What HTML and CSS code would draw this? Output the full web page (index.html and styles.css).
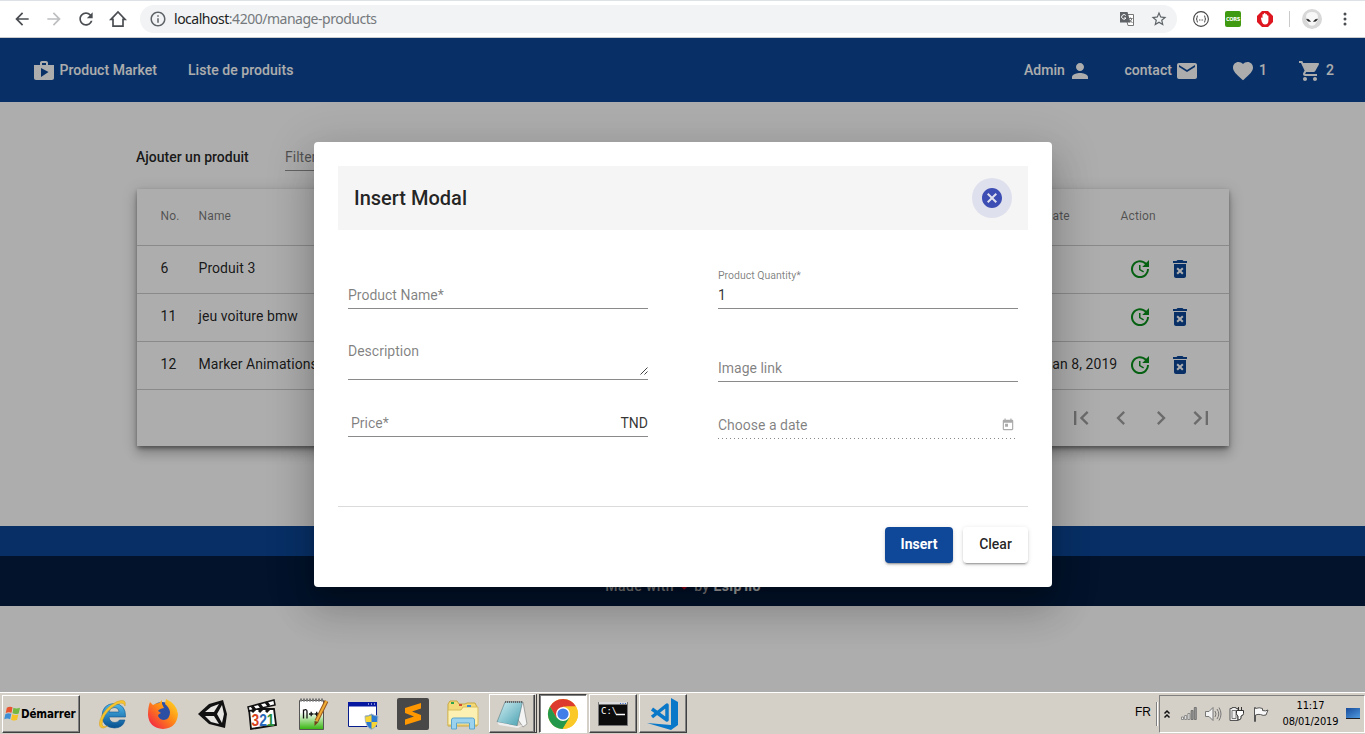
FILE: index.html
```html
<!DOCTYPE html>
<html lang="fr">
<head>
<meta charset="utf-8">
<title>Product Market</title>
<link rel="stylesheet" href="styles.css">
</head>
<body>
<svg class="defs" width="0" height="0">
  <symbol id="update" viewBox="0 0 24 24"><path d="M21 10.12h-6.78l2.74-2.82c-2.73-2.7-7.15-2.8-9.88-.1-2.73 2.71-2.73 7.08 0 9.79 2.73 2.71 7.15 2.71 9.88 0C18.32 15.65 19 14.08 19 12.1h2c0 1.98-.88 4.55-2.64 6.29-3.51 3.48-9.21 3.48-12.72 0-3.5-3.47-3.53-9.11-.02-12.58 3.51-3.47 9.14-3.47 12.65 0L21 3v7.12zM12.5 8v4.25l3.5 2.08-.72 1.21L11 13V8h1.5z"/></symbol>
  <symbol id="trash" viewBox="0 0 24 24"><path fill="#fff" d="M8 9h8v9H8z"/><path d="M6 19c0 1.1.9 2 2 2h8c1.1 0 2-.9 2-2V7H6v12zm2.46-7.12l1.41-1.41L12 12.59l2.12-2.12 1.41 1.41L13.41 14l2.12 2.12-1.41 1.41L12 15.41l-2.12 2.12-1.41-1.41L10.59 14l-2.13-2.12zM15.5 4l-1-1h-5l-1 1H5v2h14V4z"/></symbol>
</svg>
<div class="screen">
  <header class="browser">
    <svg class="b-ico" viewBox="0 0 24 24"><path d="M20 11H7.83l5.59-5.59L12 4l-8 8 8 8 1.41-1.41L7.83 13H20v-2z"/></svg>
    <svg class="b-ico off" viewBox="0 0 24 24"><path d="M4 11h12.17l-5.59-5.59L12 4l8 8-8 8-1.41-1.41L16.17 13H4z"/></svg>
    <svg class="b-ico" viewBox="0 0 24 24"><path d="M17.65 6.35C16.2 4.9 14.21 4 12 4c-4.42 0-7.99 3.58-7.99 8s3.57 8 7.99 8c3.73 0 6.84-2.55 7.73-6h-2.08c-.82 2.33-3.04 4-5.65 4-3.31 0-6-2.69-6-6s2.69-6 6-6c1.66 0 3.14.69 4.22 1.78L13 11h7V4l-2.35 2.35z"/></svg>
    <svg class="b-ico" viewBox="0 0 24 24"><path d="M3.5 12.500L12 3.500l8.500 9H18V20.500H6V12.500z" fill="none" stroke="#4a4d51" stroke-width="2"/></svg>
    <div class="omnibox">
      <svg class="info" viewBox="0 0 24 24"><path d="M11 17h2v-6h-2v6zm1-15C6.480 2 2 6.480 2 12s4.480 10 10 10 10-4.480 10-10S17.520 2 12 2zm0 18c-4.410 0-8-3.590-8-8s3.590-8 8-8 8 3.590 8 8-3.590 8-8 8zM11 9h2V7h-2v2z"/></svg>
      <span class="url"><b>localhost</b>:4200/manage-products</span>
      <svg class="translate" viewBox="0 0 16 16"><path fill="#fff" stroke="#777" d="M6 3.500h8.500v11H9z"/><path fill="#5f6368" d="M1 1h7.500l3 10.500H1z"/><path d="M6.800 4.500A2.300 2.300 0 1 0 7 7H5" fill="none" stroke="#fff"/><path d="M9.500 7.500h4M11.500 6.500v1M13 7.500q-.8 2.500-2.500 3.500M10.800 9l2.700 3" fill="none" stroke="#777"/></svg>
      <svg class="star" viewBox="0 0 24 24"><path d="M22 9.240l-7.190-.62L12 2 9.190 8.630 2 9.240l5.460 4.730L5.820 21 12 17.270 18.180 21l-1.630-7.030L22 9.240zM12 15.400l-3.760 2.270 1-4.280-3.320-2.880 4.380-.38L12 6.100l1.710 4.040 4.380.38-3.320 2.880 1 4.280L12 15.400z"/></svg>
    </div>
    <svg class="ext ext1" viewBox="0 0 16 16"><circle cx="8" cy="8" r="7.400" fill="none" stroke="#444" stroke-width="1.100"/><path d="M5 4.800q-1.200 0-1 1.700Q4.200 8 3 8q1.200 0 1 1.500-.2 1.700 1 1.700M11 4.800q1.200 0 1 1.700-.2 1.500 1 1.500-1.200 0-1 1.500.2 1.700-1 1.700M6 9h.9M7.600 9h.9M9.200 9h.9" fill="none" stroke="#444"/></svg>
    <span class="ext cors"><span>CORS</span></span>
    <svg class="ext" viewBox="0 0 16 16"><path fill="#dd1620" d="M5 0h6l5 5v6l-5 5H5l-5-5V5z"/><path fill="#fff" d="M4 7.500q0-1 .7-1t.8 1V4q0-1 .7-1t.7 1V2.800q0-.9.8-.9t.8.900V3.800q0-.9.700-.9t.8.9V5q0-.8.700-.8t.7.8v4.800q0 3.700-3.500 3.700Q6 13.500 4.900 11z"/></svg>
    <span class="sep"></span>
    <svg class="avatar" viewBox="0 0 20 20"><circle cx="10" cy="10" r="10" fill="#d8d8d8"/><path d="M4 8q0-5 6-5t6 5q0 4-3 7.500-3 2.500-6 0Q4 12 4 8z" fill="#f7f7f7"/><path d="M4.500 10q3 0 4 2.500-3 .5-4-2.500zM15.500 10q-3 0-4 2.500 3 .5 4-2.500z" fill="#222" stroke="#222" stroke-width=".5"/></svg>
    <svg class="dots" viewBox="0 0 4 16"><circle cx="2" cy="3" r="1.500"/><circle cx="2" cy="8" r="1.500"/><circle cx="2" cy="13" r="1.500"/></svg>
  </header>

  <main class="viewport">
    <nav class="navbar">
      <a class="brand"><svg viewBox="0 0 24 24"><path d="M16 6V4c0-1.110-.89-2-2-2h-4c-1.110 0-2 .89-2 2v2H2v13c0 1.110.89 2 2 2h16c1.110 0 2-.89 2-2V6h-6zm-6-2h4v2h-4V4zM9 18V9l7.500 4L9 18z"/></svg>Product Market</a>
      <a class="list">Liste de produits</a>
      <span class="grow"></span>
      <a class="admin">Admin<svg viewBox="0 0 24 24"><path d="M12 12c2.210 0 4-1.790 4-4s-1.790-4-4-4-4 1.790-4 4 1.790 4 4 4zm0 2c-2.670 0-8 1.340-8 4v2h16v-2c0-2.660-5.330-4-8-4z"/></svg></a>
      <a class="contact">contact<svg viewBox="0 0 24 24"><path d="M20 4H4c-1.100 0-1.990.9-1.990 2L2 18c0 1.100.9 2 2 2h16c1.100 0 2-.9 2-2V6c0-1.100-.9-2-2-2zm0 4l-8 5-8-5V6l8 5 8-5v2z"/></svg></a>
      <a class="fav"><svg viewBox="0 0 24 24"><path d="M12 21.350l-1.450-1.320C5.400 15.360 2 12.280 2 8.500 2 5.420 4.420 3 7.500 3c1.740 0 3.410.81 4.500 2.090C13.090 3.810 14.760 3 16.500 3 19.580 3 22 5.420 22 8.500c0 3.780-3.400 6.860-8.550 11.540L12 21.350z"/></svg>1</a>
      <a class="cart"><svg viewBox="0 0 24 24"><path d="M7 18c-1.100 0-1.990.9-1.990 2S5.900 22 7 22s2-.9 2-2-.9-2-2-2zM1 2v2h2l3.600 7.590-1.350 2.450c-.16.28-.25.61-.25.96 0 1.100.9 2 2 2h12v-2H7.420c-.14 0-.25-.11-.25-.25l.03-.12.9-1.630h7.450c.75 0 1.410-.41 1.750-1.030l3.580-6.490c.08-.14.12-.31.12-.48 0-.55-.45-1-1-1H5.210l-.94-2H1zm16 16c-1.100 0-1.990.9-1.990 2s.89 2 1.990 2 2-.9 2-2-.9-2-2-2z"/></svg>2</a>
    </nav>

    <section class="content">
      <div class="tools"><span class="add">Ajouter un produit</span><span class="filter">Filter</span></div>
      <div class="card">
        <div class="row head"><span>No.</span><span>Name</span><span>Date</span><span>Action</span></div>
        <div class="row"><span>6</span><span>Produit 3</span><span></span><span class="acts"><svg class="up"><use href="#update"/></svg><svg class="del"><use href="#trash"/></svg></span></div>
        <div class="row"><span>11</span><span>jeu voiture bmw</span><span></span><span class="acts"><svg class="up"><use href="#update"/></svg><svg class="del"><use href="#trash"/></svg></span></div>
        <div class="row"><span>12</span><span>Marker Animations</span><span>Jan 8, 2019</span><span class="acts"><svg class="up"><use href="#update"/></svg><svg class="del"><use href="#trash"/></svg></span></div>
        <div class="pager">
          <svg viewBox="0 0 24 24"><path d="M18.410 16.590L13.820 12l4.590-4.590L17 6l-6 6 6 6zM6 6h2v12H6z"/></svg>
          <svg viewBox="0 0 24 24"><path d="M15.410 7.410L14 6l-6 6 6 6 1.410-1.410L10.830 12z"/></svg>
          <svg viewBox="0 0 24 24"><path d="M10 6L8.590 7.410 13.170 12l-4.580 4.590L10 18l6-6z"/></svg>
          <svg viewBox="0 0 24 24"><path d="M5.590 7.410L10.180 12l-4.590 4.590L7 18l6-6-6-6zM16 6h2v12h-2z"/></svg>
        </div>
      </div>
    </section>
    <div class="band"></div>
    <footer class="footer">Made with <i>❤</i> by <b>Esip'llo</b></footer>

    <div class="overlay">
      <div class="modal">
        <div class="modal-bar"><h2>Insert Modal</h2>
          <span class="close"><svg viewBox="0 0 24 24"><path d="M12 2C6.470 2 2 6.470 2 12s4.470 10 10 10 10-4.470 10-10S17.530 2 12 2zm5 13.590L15.590 17 12 13.410 8.410 17 7 15.590 10.590 12 7 8.410 8.410 7 12 10.590 15.590 7 17 8.410 13.410 12 17 15.590z"/></svg></span>
        </div>
        <div class="form">
          <div class="col">
            <div class="field f-name">Product Name*</div>
            <div class="field f-desc">Description<svg class="grip" viewBox="0 0 8 8"><path d="M.5 7.500l7-7M4.500 7.500l3-3" stroke="#444" fill="none"/></svg></div>
            <div class="field f-price"><span>Price*</span><span class="dark">TND</span></div>
          </div>
          <div class="col">
            <div class="field f-qty"><small>Product Quantity*</small><span class="dark">1</span></div>
            <div class="field f-img">Image link</div>
            <div class="field f-date"><span>Choose a date</span><svg viewBox="0 0 24 24"><path d="M19 3h-1V1h-2v2H8V1H6v2H5c-1.110 0-1.990.9-1.990 2L3 19c0 1.100.89 2 2 2h14c1.100 0 2-.9 2-2V5c0-1.100-.9-2-2-2zm0 16H5V8h14v11zM7 10h5v5H7z"/></svg></div>
          </div>
        </div>
        <div class="actions"><span class="btn primary">Insert</span><span class="btn">Clear</span></div>
      </div>
    </div>
  </main>

  <footer class="taskbar">
    <div class="start"><svg viewBox="0 0 18 18"><path fill="#e8542f" d="M3 3q3-2 6-.5L8 8.300Q5 7 1.800 8.500z"/><path fill="#74b843" d="M10 3q3 1.500 7 0l-1.500 6Q12 10.300 9 8.800z"/><path fill="#3f8fd6" d="M1.500 9.500q3-1.500 6.200-.2L6.500 15Q3.500 13.500.3 15z"/><path fill="#f7c326" d="M8.700 9.800q3 1.500 6.500.3L13.800 16q-3 1.200-6.300-.4z"/></svg>Démarrer</div>
    <div class="apps">
      <span class="app"><svg viewBox="0 0 32 32"><defs><linearGradient id="ie" x2="0" y2="1"><stop stop-color="#4db9ec"/><stop offset="1" stop-color="#07508f"/></linearGradient></defs><path d="M28.500 19H12q.8 5.500 6 5.500 3 0 4.500-2.500h5.500Q26 30 17.500 30 5.500 29.500 5 18 5.500 6 17 5.500 29 6 28.500 19zM12 14h10Q21.500 9.500 17 9.500q-4.500.3-5 4.500z" fill="url(#ie)" stroke="#12558e" stroke-width=".6"/><path d="M28 8Q30 0 20 3.500 7 10 3 22q-2 8.500 3.500 8 2-.5 4-2-5 2-5.500-2Q5.500 17 15 9.500 26 1.500 28 8z" fill="#f6c52e" stroke="#d69a12" stroke-width=".5"/></svg></span>
      <span class="app"><svg viewBox="0 0 32 32"><defs><linearGradient id="ff" x1="1" y1="0" x2="0" y2="1"><stop stop-color="#ffe226"/><stop offset=".45" stop-color="#ff8a16"/><stop offset="1" stop-color="#f0134c"/></linearGradient></defs><circle cx="15" cy="15" r="11" fill="#2c4fa3"/><path d="M3 4l3 3q3-2 6-2l3-3v4l2 4q-5 1-6 3l3 2q-3 1-3 3 2 4 6 4 6-1 6-8-1-5-5-8L19 1q11 5 12 15-1 14-15 15Q2 30 1 17q0-8 2-13z" fill="url(#ff)"/></svg></span>
      <span class="app"><svg viewBox="0 0 32 32"><path fill="#111" d="M1 16L12 6l14-4 4 14-2 14-16-4z"/><path fill="#e8e6e2" d="M8 14h9l5-8-8 3zM20 16l5 9 2-9-2-9zM8 18l6 6 8 2-5-8z"/></svg></span>
      <span class="app"><svg viewBox="0 0 32 32"><path fill="#fff" stroke="#111" stroke-width="1.800" d="M2 11h25l2 16-25 4z"/><path fill="#fff" stroke="#111" stroke-width="1.500" d="M1 9l26-7 1 5-26 6z"/><path stroke="#111" stroke-width="3" d="M5 8l3 4M12 6l3 4M19 4l3 4M5 14l3-3M12 14l3-3M19 14l3-3"/><text x="4.500" y="28" class="n321" textLength="23" lengthAdjust="spacingAndGlyphs"><tspan fill="#d8431f">3</tspan><tspan fill="#2868b8">2</tspan><tspan fill="#278c37">1</tspan></text></svg></span>
      <span class="app"><svg viewBox="0 0 32 32"><defs><linearGradient id="np" x2="0" y2="1"><stop offset=".4" stop-color="#fff"/><stop offset="1" stop-color="#35b50c"/></linearGradient></defs><path fill="url(#np)" stroke="#555" d="M2.500 2.500h24v29h-24z"/><path stroke="#777" stroke-dasharray="2 1" stroke-width="3" d="M3 2h23"/><path fill="none" stroke="#111" stroke-width="1.300" d="M6.500 20.500v-9M6.500 12.500q3.500-2 3.500 1v7M12 16h4.500M14.200 13.800v4.500M17.500 16h4.500M19.700 13.800v4.500"/><path stroke="#9c5a1d" stroke-width="4" d="M29.500 3l-10 20"/><path stroke="#f0ad36" stroke-width="2" d="M29.500 3l-10 20"/><path d="M17.500 23l4 1-4 4z" fill="#754018"/></svg></span>
      <span class="app"><svg viewBox="0 0 32 32"><path fill="#fff" stroke="#061c8c" d="M1.500 4.500h28v24h-28z"/><path fill="#0617a0" d="M1 4h29v4.500H1z"/><path stroke="#fff" stroke-dasharray="1 2" d="M21 6h8"/><path d="M24.500 16q3 2 6.500 2 0 11-6.500 13.500Q18 29 18 18q3.500 0 6.500-2z" fill="#2d7bd0" stroke="#aab8c8"/><path fill="#f7d535" d="M24.500 17v7H19q-1-3-.5-5.500 3 0 6-1.500zM24.500 24v7q5-2 6-7z"/></svg></span>
      <span class="app"><svg viewBox="0 0 32 32"><rect width="32" height="32" rx="2" fill="#484848"/><path fill="#ff9800" d="M8 10l16-5v5.500l-9 3 9 3.500v5L8 27v-5.500l9-3L8 15z"/></svg></span>
      <span class="app"><svg viewBox="0 0 32 32"><path fill="#f3d978" stroke="#c9a842" d="M1 6l2-3h7l2 3h6l2-1h8l2 4v19H1z"/><path fill="#fcf0b3" stroke="#d8bd62" d="M1 12h13l2-3h15v18H1z"/><path stroke="#2da44b" stroke-width="2" d="M4 5h3"/><path stroke="#d04d31" stroke-width="2" d="M12 7h3"/><path stroke="#3689d4" stroke-width="2" d="M20 8h4"/><path fill="#9bd3ef" stroke="#5aa5ce" d="M4.500 31V22q0-2 2-2h19q2 0 2 2v9h-5v-6h-13v6z"/></svg></span>
      <span class="app raised stack"><svg viewBox="0 0 32 32"><defs><linearGradient id="nt" x2="1" y2="1"><stop stop-color="#d2eff3"/><stop offset="1" stop-color="#459fb0"/></linearGradient></defs><path fill="#f4f4f4" stroke="#888" stroke-width=".7" d="M10 4h17l4 22-4 3z"/><path fill="url(#nt)" stroke="#65858b" stroke-width=".7" d="M9 4h17.500L21 28 1 24z"/><path d="M1 24l20 4 6-1-5 3-19-3z" fill="#eee"/><path stroke="#666" stroke-dasharray="1 1" stroke-width="2" d="M9 4h18"/></svg></span>
      <span class="app active"><svg viewBox="0 0 32 32"><circle cx="16" cy="16" r="15" fill="#fbc927"/><path fill="#dc3b2d" d="M3 8.500A15 15 0 0 1 29 8.500H16L9.500 20z"/><path fill="#25994b" d="M3 8.500A15 15 0 0 0 16 31l6.500-11.200L9.500 19.800z"/><path fill="#fbc927" d="M29 8.500A15 15 0 0 1 15.500 31l7-11.300-3-11.200z"/><circle cx="16" cy="16" r="7" fill="#fff"/><circle cx="16" cy="16" r="5.600" fill="#3f7de8"/></svg></span>
      <span class="app raised"><svg viewBox="0 0 32 32"><path fill="#0c0c0c" stroke="#777" d="M1.500 4.500h29v23h-29z"/><path fill="#ddd" d="M2 4h28v2.500H2z"/><path stroke="#36c" stroke-dasharray="1 1.500" d="M23 5.500h6"/><text x="4" y="16" class="cmd">C:\</text><path stroke="#fff" stroke-width="1.500" d="M19 16.500h9"/></svg></span>
      <span class="app raised"><svg viewBox="0 0 32 32"><path fill="#0a78c8" d="M24 0l7 4v23l-7 5L0 25l24 2z"/><path fill="none" stroke="#0a78c8" stroke-width="3.500" stroke-linejoin="round" d="M5 11l15 11V7L5 19"/></svg></span>
    </div>
    <span class="lang">FR</span>
    <div class="tray">
      <svg class="chev" viewBox="0 0 8 10"><path d="M1.500 4.500L4 2l2.500 2.500M1.500 8.500L4 6l2.500 2.500" fill="none" stroke="#111" stroke-width="1.500"/></svg>
      <svg class="sig" viewBox="0 0 16 13"><path fill="#eee" stroke="#777" stroke-width=".8" d="M.5 10h2v2.500h-2zM3.700 8.500h2v4h-2zM6.900 6.500h2v6h-2z"/><path fill="#999" stroke="#666" stroke-width=".8" d="M10.100 3.500h2v9h-2zM13.300.5h2v12h-2z"/></svg>
      <svg class="vol" viewBox="0 0 17 14"><path fill="#f2f2f2" stroke="#777" d="M.5 4.500H4l4-4v13l-4-4H.5z"/><path d="M10 4q2 3 0 6M12 2q3.500 5 0 10M14 .5q4 6.500 0 13" fill="none" stroke="#777"/></svg>
      <svg class="plug" viewBox="0 0 16 16"><path fill="#eee" stroke="#555" d="M1 2.500h2v-1h4v1h2v12H1z"/><path fill="none" stroke="#777" d="M3 4.500h4v8H3z"/><path fill="#fff" stroke="#333" d="M7.500 4.500h7v3q0 2-2.500 2.500v2q0 2-3 2v-4q-1.500-.5-1.500-2.500zM9.500 1v3M12.500 1v3"/></svg>
      <svg class="flag" viewBox="0 0 16 16"><path fill="#f8f8f8" stroke="#555" d="M2.500 15.500h-1V1.500h1v1q4-1.500 7 0v2q3 1 5.500-.5l-2 5q-3 1-5.500-.5-2.500-.5-5 .5z"/></svg>
      <div class="clock"><span>11:17</span><span>08/01/2019</span></div>
      <span class="desk"></span>
    </div>
  </footer>
</div>
</body>
</html>
```
FILE: styles.css
```css
* { box-sizing: border-box; }
body { margin: 0; overflow: hidden; font-family: Roboto, "Liberation Sans", sans-serif; font-size: 14px; color: rgba(0,0,0,.87); }
svg { display: block; flex: none; }
.defs { display: none; }
.screen { width: 1365px; height: 734px; display: flex; flex-direction: column; }

/* browser toolbar */
.browser { height: 38px; display: flex; align-items: center; padding: 0 12px 0 12px; border-top: 1px solid #dee1e6; border-bottom: 1px solid #c9cbce; background: #fff; }
.b-ico { width: 20px; height: 20px; margin-right: 12px; fill: #4a4d51; }
.b-ico.off { fill: #bdbfc1; }
.omnibox { width: 1037px; height: 28px; border-radius: 14px; background: #f1f3f4; display: flex; align-items: center; padding: 0 9px; }
.info { width: 18px; height: 18px; fill: #5f6368; margin-right: 7px; }
.url { flex: 1; font-family: "Noto Sans", sans-serif; font-size: 14px; line-height: 20px; padding-bottom: 1px; letter-spacing: -.48px; color: #75797d; }
.url b { font-weight: 400; color: #222; }
.translate { width: 16px; height: 16px; margin-right: 15px; }
.star { width: 18px; height: 18px; fill: #5f6368; }
.ext { width: 16px; height: 16px; margin-right: 16px; }
.ext1 { margin-left: 16px; }
.cors { border-radius: 2px; background: #3f9a12; color: #fff; display: flex; justify-content: center; font: bold 5.5px/16px "DejaVu Sans Condensed", sans-serif; letter-spacing: -.35px; }
.sep { width: 1px; height: 16px; background: #c8cacc; margin-right: 12px; }
.avatar { width: 20px; height: 20px; margin-right: 21px; }
.dots { width: 4px; height: 16px; fill: #4a4d51; }

/* page */
.viewport { position: relative; height: 654px; background: #fff; }
.navbar { height: 64px; background: #0d4899; color: #fff; display: flex; align-items: center; padding: 0 31px 0 32px; font-weight: 500; }
.navbar a { display: flex; align-items: center; line-height: 24px; letter-spacing: .05px; }
.navbar svg { width: 24px; height: 24px; fill: #fff; margin-top: 1px; }
.brand { gap: 3.5px; width: 156px; }
.grow { flex: 1; }
.admin { gap: 3.5px; margin-right: 32px; }
.contact { gap: 3.5px; margin-right: 32px; }
.fav { gap: 3.5px; margin-right: 31px; }
.cart { gap: 4px; }
.content { height: 424px; padding: 39px 136px 0 136px; }
.tools { display: flex; height: 30px; line-height: 32px; font-weight: 500; margin-bottom: 18px; }
.add { width: 149px; }
.filter { width: 300px; border-bottom: 1px solid rgba(0,0,0,.42); font-weight: 400; color: rgba(0,0,0,.54); }
.card { width: 1092px; height: 257px; margin-left: 1px; background: #fff; box-shadow: 0 5px 5px -3px rgba(0,0,0,.2), 0 8px 10px 1px rgba(0,0,0,.14), 0 3px 14px 2px rgba(0,0,0,.12), 0 2px 4px rgba(0,0,0,.3); }
.row { height: 48px; padding: 0 0 3px 23.5px; display: grid; grid-template-columns: 38px 846px 76px 1fr; align-items: center; border-bottom: 1px solid rgba(0,0,0,.2); letter-spacing: .06px; }
.row.head { height: 57px; padding-bottom: 0; font-size: 12px; color: rgba(0,0,0,.54); }
.head span { padding-bottom: 2px; letter-spacing: .15px; }
.acts { display: flex; gap: 16px; padding: 1px 0 0 7.5px; }
.acts svg { width: 24px; height: 24px; }
.up { fill: #0a8f1c; }
.del { fill: #0d4899; }
.pager { height: 56px; display: flex; justify-content: flex-end; align-items: center; gap: 12px; padding-right: 14px; }
.pager svg { width: 28px; height: 28px; fill: rgba(0,0,0,.38); }
.band { height: 30px; background: #0d4899; }
.footer { height: 50px; background: #041d40; color: #bbb; font-weight: 500; text-align: center; padding: 21px 0 0 1px; line-height: 18px; letter-spacing: .4px; }
.footer i { color: #f00020; font-style: normal; }
.footer b { color: #fff; font-weight: 700; }

/* dialog */
.overlay { position: absolute; inset: 0; background: rgba(0,0,0,.32); display: flex; justify-content: center; align-items: flex-start; padding: 104px 0 0 1px; }
.modal { width: 738px; height: 445px; border-radius: 4px; background: #fff; padding: 24px; box-shadow: 0 11px 15px -7px rgba(0,0,0,.2), 0 24px 38px 3px rgba(0,0,0,.14), 0 9px 46px 8px rgba(0,0,0,.12); }
.modal-bar { height: 64px; background: #f5f5f5; padding: 0 16px; display: flex; align-items: center; justify-content: space-between; }
.modal-bar h2 { margin: 0; font-size: 20px; font-weight: 500; }
.close { width: 40px; height: 40px; border-radius: 50%; background: #dfe0ed; display: grid; place-items: center; }
.close svg { width: 24px; height: 24px; fill: #3c4db3; }
.form { height: 277px; padding: 0 10px; border-bottom: 1px solid rgba(0,0,0,.14); display: flex; gap: 70px; }
.col { width: 300px; display: flex; flex-direction: column; }
.field { border-bottom: 1px solid #8a8a8a; line-height: 20px; color: rgba(0,0,0,.5); }
.dark { color: rgba(0,0,0,.8); }
.f-name { height: 79px; padding-top: 55px; }
.f-desc { height: 71px; padding-top: 32px; display: flex; justify-content: space-between; }
.grip { width: 8px; height: 8px; margin-top: 26px; }
.f-price { height: 57px; padding: 33px 0 0 3px; display: flex; justify-content: space-between; }
.f-qty { height: 79px; padding-top: 38px; display: flex; flex-direction: column; }
.f-qty small { font-size: 10.5px; line-height: 16px; margin-bottom: 1px; }
.f-img { height: 73px; padding-top: 49px; }
.f-date { height: 57px; padding: 33px 3px 0 0; display: flex; justify-content: space-between; border: 0; background: repeating-linear-gradient(to right, #888 0 1px, transparent 1px 4px) 0 100% / 298px 1px no-repeat; }
.f-date svg { width: 14px; height: 14px; margin-top: 3px; fill: #aaa; }
.actions { display: flex; justify-content: flex-end; gap: 10px; padding-top: 20px; }
.btn { height: 36px; width: 65px; border-radius: 4px; line-height: 35px; text-align: center; font-weight: 500; box-shadow: 0 3px 1px -2px rgba(0,0,0,.2), 0 2px 2px rgba(0,0,0,.14), 0 1px 5px rgba(0,0,0,.12); }
.btn.primary { width: 68px; background: #0f4899; color: #fff; font-weight: 700; }

/* taskbar */
.taskbar { height: 42px; background: #d4d0c8; border-top: 1px solid #fff; display: flex; align-items: center; padding: 0 0 0 2px; }
.start { width: 78px; height: 38px; display: flex; align-items: center; padding-left: 1px; font: bold 11.5px "DejaVu Sans Condensed", sans-serif; letter-spacing: -.15px; color: #000; border: 1px solid; border-color: #fff #404040 #404040 #fff; box-shadow: inset -1px -1px #808080; }
.start svg { width: 17px; height: 17px; }
.apps { display: flex; flex: 1; padding-left: 9px; gap: 2px; }
.app { width: 48px; height: 39px; display: grid; place-items: center; }
.app svg { width: 32px; height: 32px; }
.raised, .active { border: 1px solid; border-color: #fff #404040 #404040 #fff; box-shadow: inset -1px -1px #808080; }
.stack { border-right: 3px double #404040; }
.active { background: #fff; border-color: #404040 #fff #fff #404040; box-shadow: inset 1px 1px #808080; }
.n321 { font: bold 16px "Liberation Sans", sans-serif; }
.cmd { font: 9px "DejaVu Sans Mono", monospace; fill: #fff; }
.lang { font: 12px/21px "Liberation Sans", sans-serif; color: #000; padding: 0 5px 4px 0; border-right: 1px solid #808080; height: 24px; margin-right: 2px; box-shadow: 1px 0 #fff; }
.tray { width: 206px; height: 38px; display: flex; align-items: center; padding-left: 3px; border: 1px solid; border-color: #808080 #fff #fff #808080; }
.chev { width: 8px; height: 12px; margin-right: 10px; }
.sig { width: 16px; height: 13px; margin-right: 8px; }
.vol { width: 17px; height: 14px; margin-right: 7px; }
.plug { width: 16px; height: 16px; margin-right: 8px; }
.flag { width: 16px; height: 16px; margin-right: 13px; }
.clock { width: 57px; display: flex; flex-direction: column; align-items: center; font: 11px/16px "DejaVu Sans Condensed", sans-serif; letter-spacing: -.1px; color: #000; margin-right: 7px; white-space: nowrap; }
.desk { width: 14px; height: 11px; background: linear-gradient(150deg, #174b9a, #4f9be0); border-bottom: 1px solid #222; }
```
